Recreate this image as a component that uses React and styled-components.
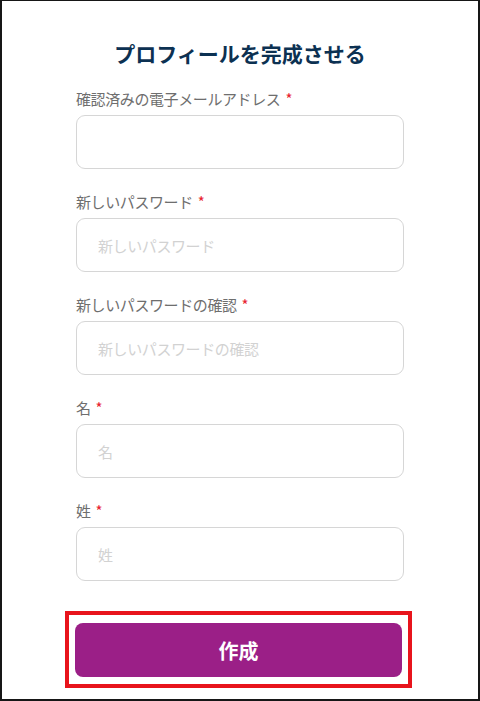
import React from 'react'
import styled, { createGlobalStyle } from 'styled-components'

const GlobalStyle = createGlobalStyle`
  html, body {
    margin: 0;
    padding: 0;
    background: #fff;
  }
  body {
    font-family: "Noto Sans CJK JP", "Noto Sans", sans-serif;
  }
`

const Frame = styled.div`
  box-sizing: border-box;
  width: 480px;
  height: 701px;
  border: 2px solid #161616;
  border-top-width: 1px;
  background: #fff;
  overflow: hidden;
`

const Form = styled.form`
  width: 328px;
  margin: 0 auto;
  padding-top: 38px;
  display: flex;
  flex-direction: column;
`

const Title = styled.h1`
  margin: 0 0 21px;
  text-align: center;
  font-size: 21px;
  line-height: 29px;
  font-weight: 700;
  color: #0c3152;
`

const Field = styled.div`
  display: flex;
  flex-direction: column;
  gap: 6px;
  margin-bottom: 23px;
`

const Label = styled.label`
  font-size: 15px;
  line-height: 20px;
  letter-spacing: -0.4px;
  color: #6e6e6e;
`

const Required = styled.span`
  color: #e8232f;
  margin-left: 5px;
`

const Input = styled.input`
  box-sizing: border-box;
  width: 100%;
  height: 54px;
  padding: 0 21px;
  border: 1px solid #d6d6d6;
  border-radius: 9px;
  font-family: inherit;
  font-size: 15px;
  letter-spacing: -0.4px;
  color: #333;
  outline: none;
  background: #fff;

  &::placeholder {
    color: #d2d2d2;
  }
`

const Highlight = styled.div`
  align-self: center;
  margin-top: 7px;
  margin-left: -3px;
  padding: 8px 6px 7px;
  border: 4px solid #e8141c;
`

const SubmitButton = styled.button`
  display: block;
  width: 327px;
  height: 54px;
  border: none;
  border-radius: 8px;
  background: #9b1f87;
  color: #fff;
  font-family: inherit;
  font-size: 20px;
  font-weight: 700;
  cursor: pointer;
`

const fields = [
  { label: '確認済みの電子メールアドレス', placeholder: '' },
  { label: '新しいパスワード', placeholder: '新しいパスワード' },
  { label: '新しいパスワードの確認', placeholder: '新しいパスワードの確認' },
  { label: '名', placeholder: '名' },
  { label: '姓', placeholder: '姓' },
]

const App = () => (
  <>
    <GlobalStyle />
    <Frame>
      <Form onSubmit={e => e.preventDefault()}>
        <Title>プロフィールを完成させる</Title>
        {fields.map((f, i) => (
          <Field key={i}>
            <Label htmlFor={`field-${i}`}>
              {f.label}<Required>*</Required>
            </Label>
            <Input id={`field-${i}`} type="text" placeholder={f.placeholder} />
          </Field>
        ))}
        <Highlight>
          <SubmitButton type="submit">作成</SubmitButton>
        </Highlight>
      </Form>
    </Frame>
  </>
)

export default App
